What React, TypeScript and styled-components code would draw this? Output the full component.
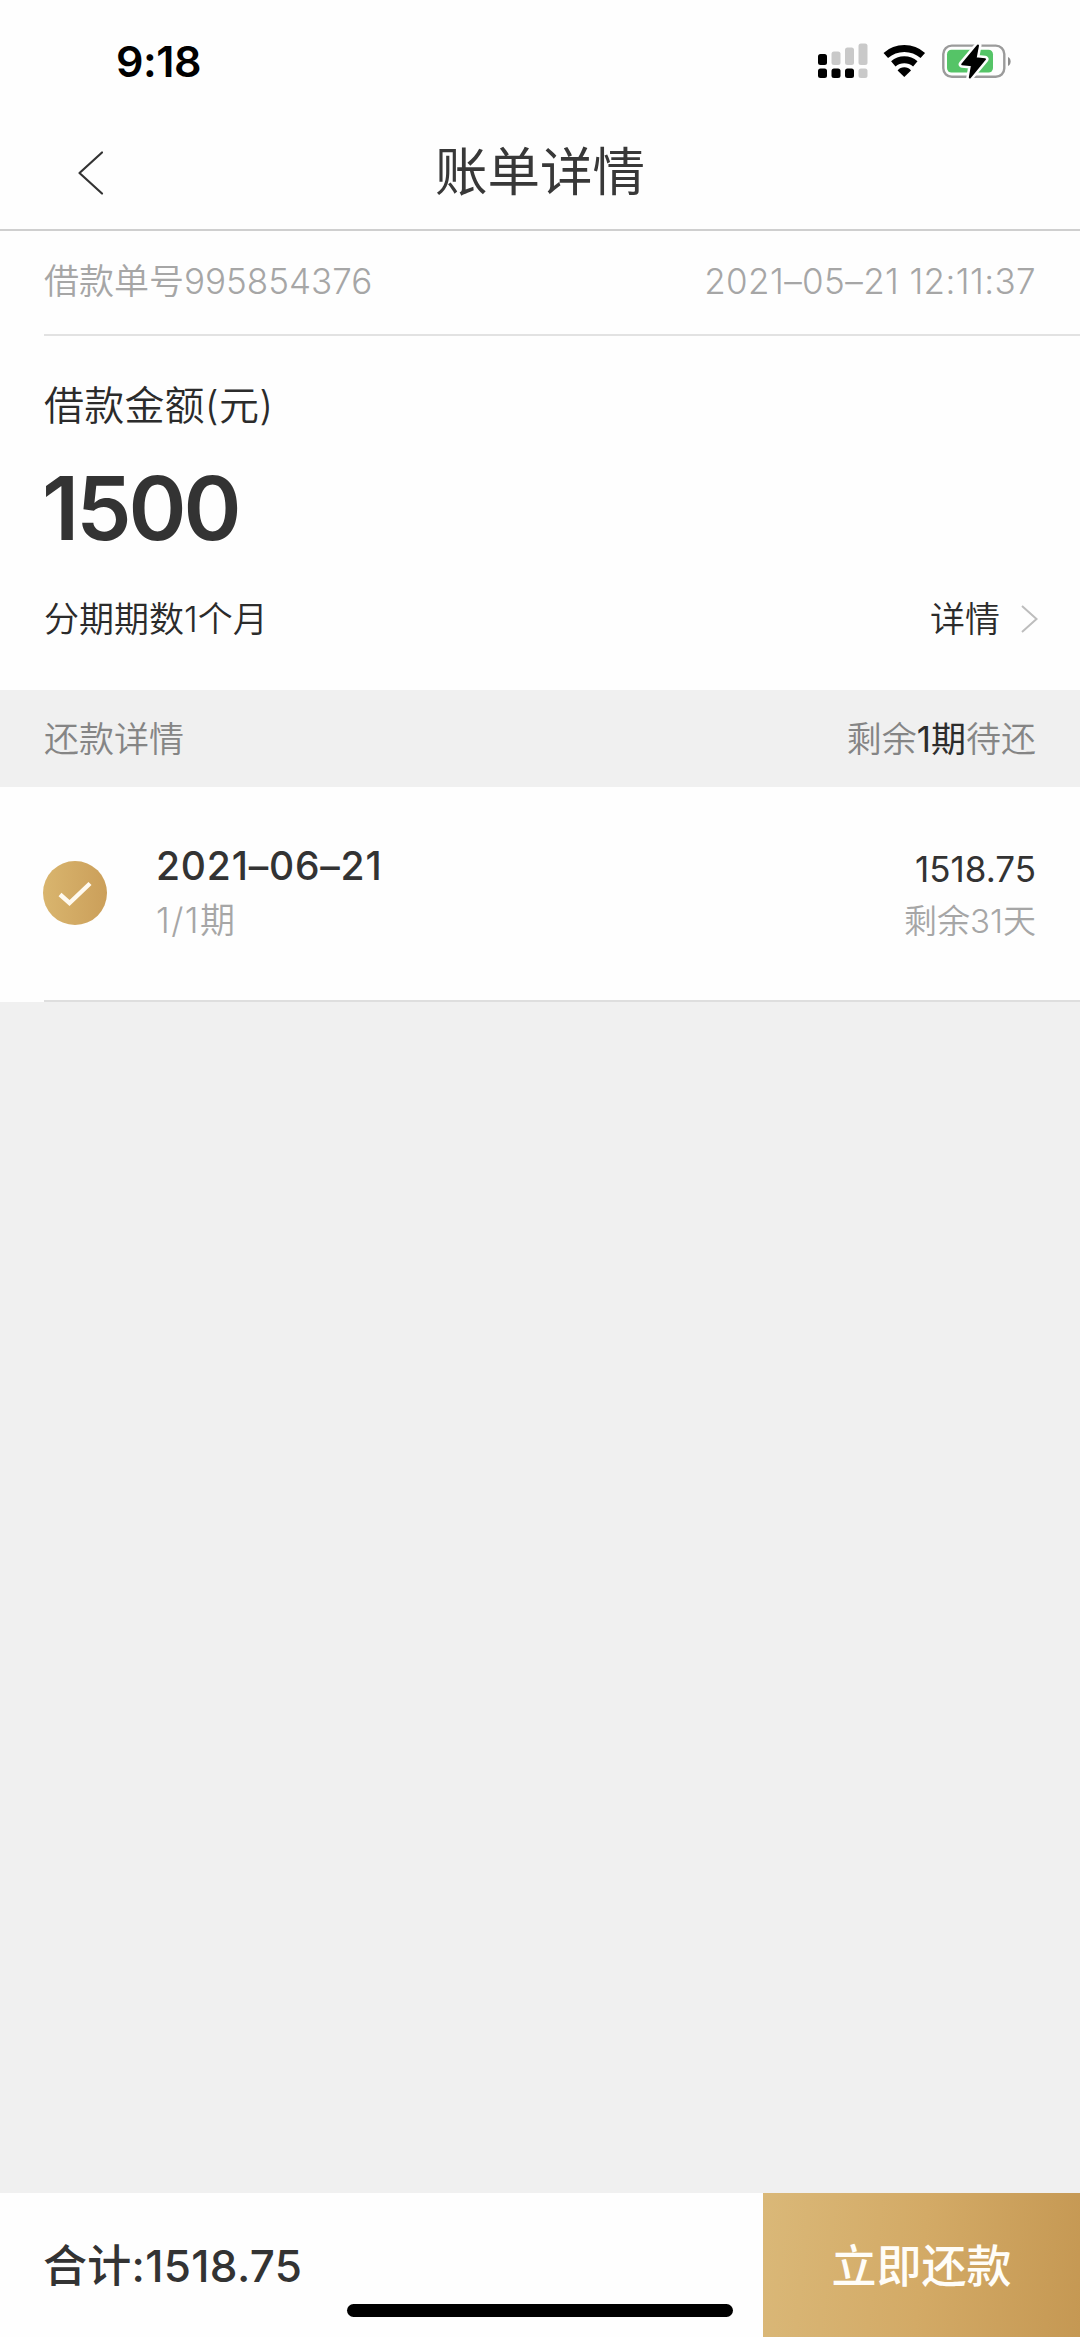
import React from "react";
import styled, { createGlobalStyle } from "styled-components";

const GlobalStyle = createGlobalStyle`
  *, *::before, *::after { box-sizing: border-box; }
  body {
    margin: 0;
    background: #f0f0f0;
    font-family: Inter, "Noto Sans CJK SC", sans-serif;
    color: #333;
  }
`;

const Page = styled.div`
  width: 1080px;
  height: 2337px;
  display: flex;
  flex-direction: column;
  background: #f0f0f0;
  overflow: hidden;
`;

const StatusBar = styled.div`
  height: 112px;
  padding: 10px 69px 0 116px;
  display: flex;
  align-items: center;
  justify-content: space-between;
  background: #fefefe;
  color: #000;
`;

const StatusIcons = styled.div`
  display: flex;
  align-items: center;
`;

const NavBar = styled.header`
  height: 119px;
  display: grid;
  grid-template-columns: 180px 1fr 180px;
  align-items: center;
  background: #fefefe;
  border-bottom: 2px solid #cfcfcf;
`;

const BackButton = styled.button`
  border: 0;
  padding: 5px 0 0 76px;
  background: none;
  display: flex;
`;

const Title = styled.h1`
  margin: 0;
  padding-top: 3px;
  text-align: center;
  font-size: 52.5px;
  line-height: 70px;
  font-weight: 400;
  color: #383838;
`;

const Text = styled.span<{
  $size: number;
  $color?: string;
  $weight?: number;
  $spacing?: number;
  $line?: number;
}>`
  display: block;
  white-space: nowrap;
  font-size: ${(p) => p.$size}px;
  line-height: ${(p) => p.$line ?? 52}px;
  font-weight: ${(p) => p.$weight ?? 400};
  color: ${(p) => p.$color ?? "#333"};
  letter-spacing: ${(p) => p.$spacing ?? 0}px;
`;

const OrderRow = styled.div`
  height: 105px;
  padding: 0 44px 6px;
  display: flex;
  align-items: center;
  justify-content: space-between;
  background:
    linear-gradient(#e2e2e2, #e2e2e2) 44px 100% / 100% 2px no-repeat,
    #fefefe;
`;

const AmountSection = styled.section`
  height: 354px;
  padding: 43px 44px 0;
  background: #fefefe;
`;

const Amount = styled.div`
  margin-top: 17px;
  margin-left: -2px;
  font-size: 88px;
  line-height: 116px;
  font-weight: 560;
  letter-spacing: -3px;
  color: #333;
`;

const SplitRow = styled.div`
  margin-top: 27px;
  display: flex;
  align-items: center;
  justify-content: space-between;
`;

const DetailLink = styled.a`
  margin-right: -2px;
  display: flex;
  align-items: center;
  gap: 21px;
  color: #333;
`;

const SectionHeader = styled.div`
  height: 97px;
  padding: 0 44px;
  display: flex;
  align-items: center;
  justify-content: space-between;
  background: #f0f0f0;
`;

const Strong = styled.strong`
  font-weight: 400;
  color: #2c2c2c;
`;

const Installment = styled.div`
  height: 215px;
  padding: 0 44px 4px 43px;
  display: flex;
  align-items: center;
  background:
    linear-gradient(#dedede, #dedede) 44px 100% / 100% 2px no-repeat,
    #fefefe;
`;

const CheckMark = styled.span`
  width: 64px;
  height: 64px;
  padding-top: 3px;
  border-radius: 50%;
  display: grid;
  place-items: center;
  background: linear-gradient(90deg, #d9b56e, #cb9f5a);
`;

const Stack = styled.div<{ $align?: string }>`
  display: flex;
  flex-direction: column;
  align-items: ${(p) => p.$align ?? "flex-start"};
`;

const DueDate = styled(Stack)`
  flex: 1;
  padding-left: 49px;
`;

const AmountDue = styled(Stack)`
  padding-top: 4px;
`;

const Footer = styled.footer`
  position: relative;
  height: 144px;
  margin-top: auto;
  display: flex;
  background: #fefefe;
`;

const Total = styled.div`
  flex: 1;
  padding: 1px 0 0 43px;
  display: flex;
  align-items: center;
`;

const PayButton = styled.button`
  width: 317px;
  border: 0;
  padding: 3px 0 0;
  display: flex;
  align-items: center;
  justify-content: center;
  font-family: inherit;
  background: linear-gradient(96deg, #dab878 0%, #d3aa66 50%, #c59853 100%);
`;

const HomeIndicator = styled.div`
  position: absolute;
  left: 347px;
  bottom: 20px;
  width: 386px;
  height: 13px;
  border-radius: 7px;
  background: #000;
`;

const SignalIcon = () => (
  <svg width="50" height="36" viewBox="0 0 50 36">
    <g fill="#000">
      <rect x="0" y="11" width="9" height="11" rx="2.5" />
      <rect x="0" y="25.5" width="9" height="9.5" rx="2.5" />
      <rect x="13.5" y="25.5" width="9" height="9.5" rx="2.5" />
      <rect x="27" y="25.5" width="9" height="9.5" rx="2.5" />
    </g>
    <g fill="#c9c9c9">
      <rect x="13.5" y="8.5" width="9" height="13.5" rx="2.5" />
      <rect x="27" y="4.5" width="9" height="17.5" rx="2.5" />
      <rect x="40.5" y="0.5" width="9" height="21.5" rx="2.5" />
      <rect x="40.5" y="25.5" width="9" height="9.5" rx="2.5" />
    </g>
  </svg>
);

const WifiSvg = styled.svg`
  margin-left: 15px;
`;

const WifiIcon = () => (
  <WifiSvg width="43" height="36" viewBox="0 0 43 36">
    <g fill="none" stroke="#000" strokeWidth="6.8">
      <path d="M2.8 12.5 A28 28 0 0 1 39.8 12.5" />
      <path d="M10.3 20.8 A17 17 0 0 1 32.3 20.8" />
    </g>
    <path d="M21.3 34 L14.6 27.5 A8.5 8.5 0 0 1 28 27.5 Z" />
  </WifiSvg>
);

const BatterySvg = styled.svg`
  margin-left: 15px;
`;

const BOLT = "M37 4.5 L21.2 23.3 L31 24.2 L28.8 36.5 L44 18.2 L34.6 17.3 Z";

const BatteryIcon = () => (
  <BatterySvg width="70" height="40" viewBox="0 0 70 40">
    <rect x="2.3" y="4.6" width="61" height="31.2" rx="8.5" fill="#fefefe" stroke="#9b9b9b" strokeWidth="2.4" />
    <rect x="6" y="8.8" width="46" height="22.8" rx="4.5" fill="#55c467" />
    <path d="M67 16 C70.5 17.5 70.5 23.5 67 25 Z" fill="#8d8d8d" />
    <path d={BOLT} fill="#fefefe" stroke="#fefefe" strokeWidth="7" strokeLinejoin="round" />
    <path d={BOLT} fill="#000" stroke="#000" strokeWidth="2" strokeLinejoin="round" />
  </BatterySvg>
);

export default function App() {
  return (
    <>
      <GlobalStyle />
      <Page>
        <StatusBar>
          <Text $size={43} $weight={600} $color="#000" $spacing={-0.5}>9:18</Text>
          <StatusIcons>
            <SignalIcon />
            <WifiIcon />
            <BatteryIcon />
          </StatusIcons>
        </StatusBar>
        <NavBar>
          <BackButton aria-label="返回">
            <svg width="30" height="46" viewBox="0 0 30 46" fill="none" stroke="#333" strokeWidth="2.2" strokeLinecap="round" strokeLinejoin="round">
              <path d="M26 2.5 L3.5 23 L26 43.5" />
            </svg>
          </BackButton>
          <Title>账单详情</Title>
        </NavBar>

        <OrderRow>
          <Text $size={35} $weight={350} $color="#a6a6a6">借款单号995854376</Text>
          <Text $size={35} $weight={350} $color="#a6a6a6" $spacing={0.4}>2021–05–21 12:11:37</Text>
        </OrderRow>

        <AmountSection>
          <Text $size={40} $weight={350} $line={54} $color="#2b2b2b" $spacing={0.2}>借款金额(元)</Text>
          <Amount>1500</Amount>
          <SplitRow>
            <Text $size={35} $weight={350} $color="#2b2b2b">分期期数1个月</Text>
            <DetailLink>
              <Text $size={35} $weight={350} $color="#2b2b2b">详情</Text>
              <svg width="17" height="28" viewBox="0 0 17 28" fill="none" stroke="#bdbdbd" strokeWidth="2">
                <path d="M1 1 L15.5 14 L1 27" />
              </svg>
            </DetailLink>
          </SplitRow>
        </AmountSection>

        <SectionHeader>
          <Text $size={35} $weight={350} $color="#858585">还款详情</Text>
          <Text $size={35} $weight={350} $color="#858585">
            剩余<Strong>1期</Strong>待还
          </Text>
        </SectionHeader>

        <Installment>
          <CheckMark>
            <svg width="36" height="28" viewBox="0 0 36 28" fill="none" stroke="#fffaf0" strokeWidth="4.4">
              <path d="M3 14.5 L12.5 23 L33 3.5" />
            </svg>
          </CheckMark>
          <DueDate>
            <Text $size={39} $weight={500} $line={54} $spacing={0.8}>2021–06–21</Text>
            <Text $size={35} $weight={350} $color="#a6a6a6" $line={54} $spacing={1.4}>1/1期</Text>
          </DueDate>
          <AmountDue $align="flex-end">
            <Text $size={35} $weight={370}>1518.75</Text>
            <Text $size={33} $weight={350} $color="#a6a6a6">剩余31天</Text>
          </AmountDue>
        </Installment>

        <Footer>
          <Total>
            <Text $size={44} $weight={500} $line={60} $spacing={0.3}>合计:1518.75</Text>
          </Total>
          <PayButton>
            <Text $size={45} $weight={500} $color="#fffdf8" $line={60}>立即还款</Text>
          </PayButton>
          <HomeIndicator />
        </Footer>
      </Page>
    </>
  );
}
